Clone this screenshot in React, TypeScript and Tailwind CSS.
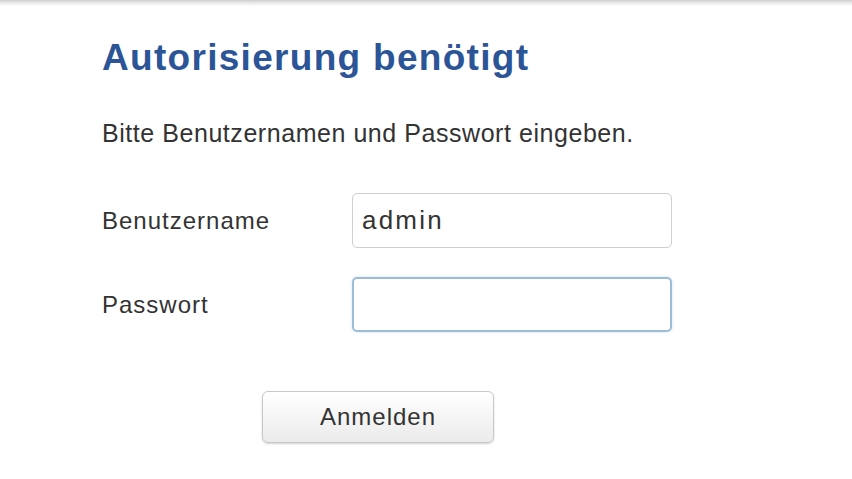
export default function App() {
  return (
    <main className="min-h-screen w-full bg-white font-['Liberation_Sans',Arial,sans-serif] text-[#333]">
      <div className="h-[6px] bg-gradient-to-b from-[#cfcfcf] via-[#e9e9e9] to-white" />
      <div className="pl-[102px] pt-[29px]">
        <h1 className="text-[37px] font-bold leading-[46px] tracking-[1.3px] text-[#2b5597]">
          Autorisierung benötigt
        </h1>

        <p className="mt-[37px] text-[25px] leading-[30px] tracking-[0.55px]">
          Bitte Benutzernamen und Passwort eingeben.
        </p>

        <form className="mt-[45px] flex flex-col gap-[29px]">
          <div className="flex items-center">
            <label className="w-[250px] text-[24px] tracking-[1px]">Benutzername</label>
            <input
              defaultValue="admin"
              className="h-[55px] w-[320px] rounded-[5px] border border-[#cfcfcf] px-[9px] text-[26px] tracking-[2.2px] text-[#333] outline-none"
            />
          </div>
          <div className="flex items-center">
            <label className="w-[250px] text-[24px] tracking-[1px]">Passwort</label>
            <input
              type="password"
              className="h-[55px] w-[320px] rounded-[5px] border-2 border-[#9dbdd6] px-[9px] text-[24px] outline-none shadow-[0_0_3px_rgba(120,160,200,0.35)]"
            />
          </div>

          <div className="ml-[160px] mt-[30px]">
            <button
              type="button"
              className="h-[52px] w-[232px] rounded-[6px] border border-[#c8c8c8] bg-gradient-to-b from-white to-[#ebebeb] text-[24px] tracking-[1px] text-[#333] shadow-[0_1px_2px_rgba(0,0,0,0.18)]"
            >
              Anmelden
            </button>
          </div>
        </form>
      </div>
    </main>
  );
}
